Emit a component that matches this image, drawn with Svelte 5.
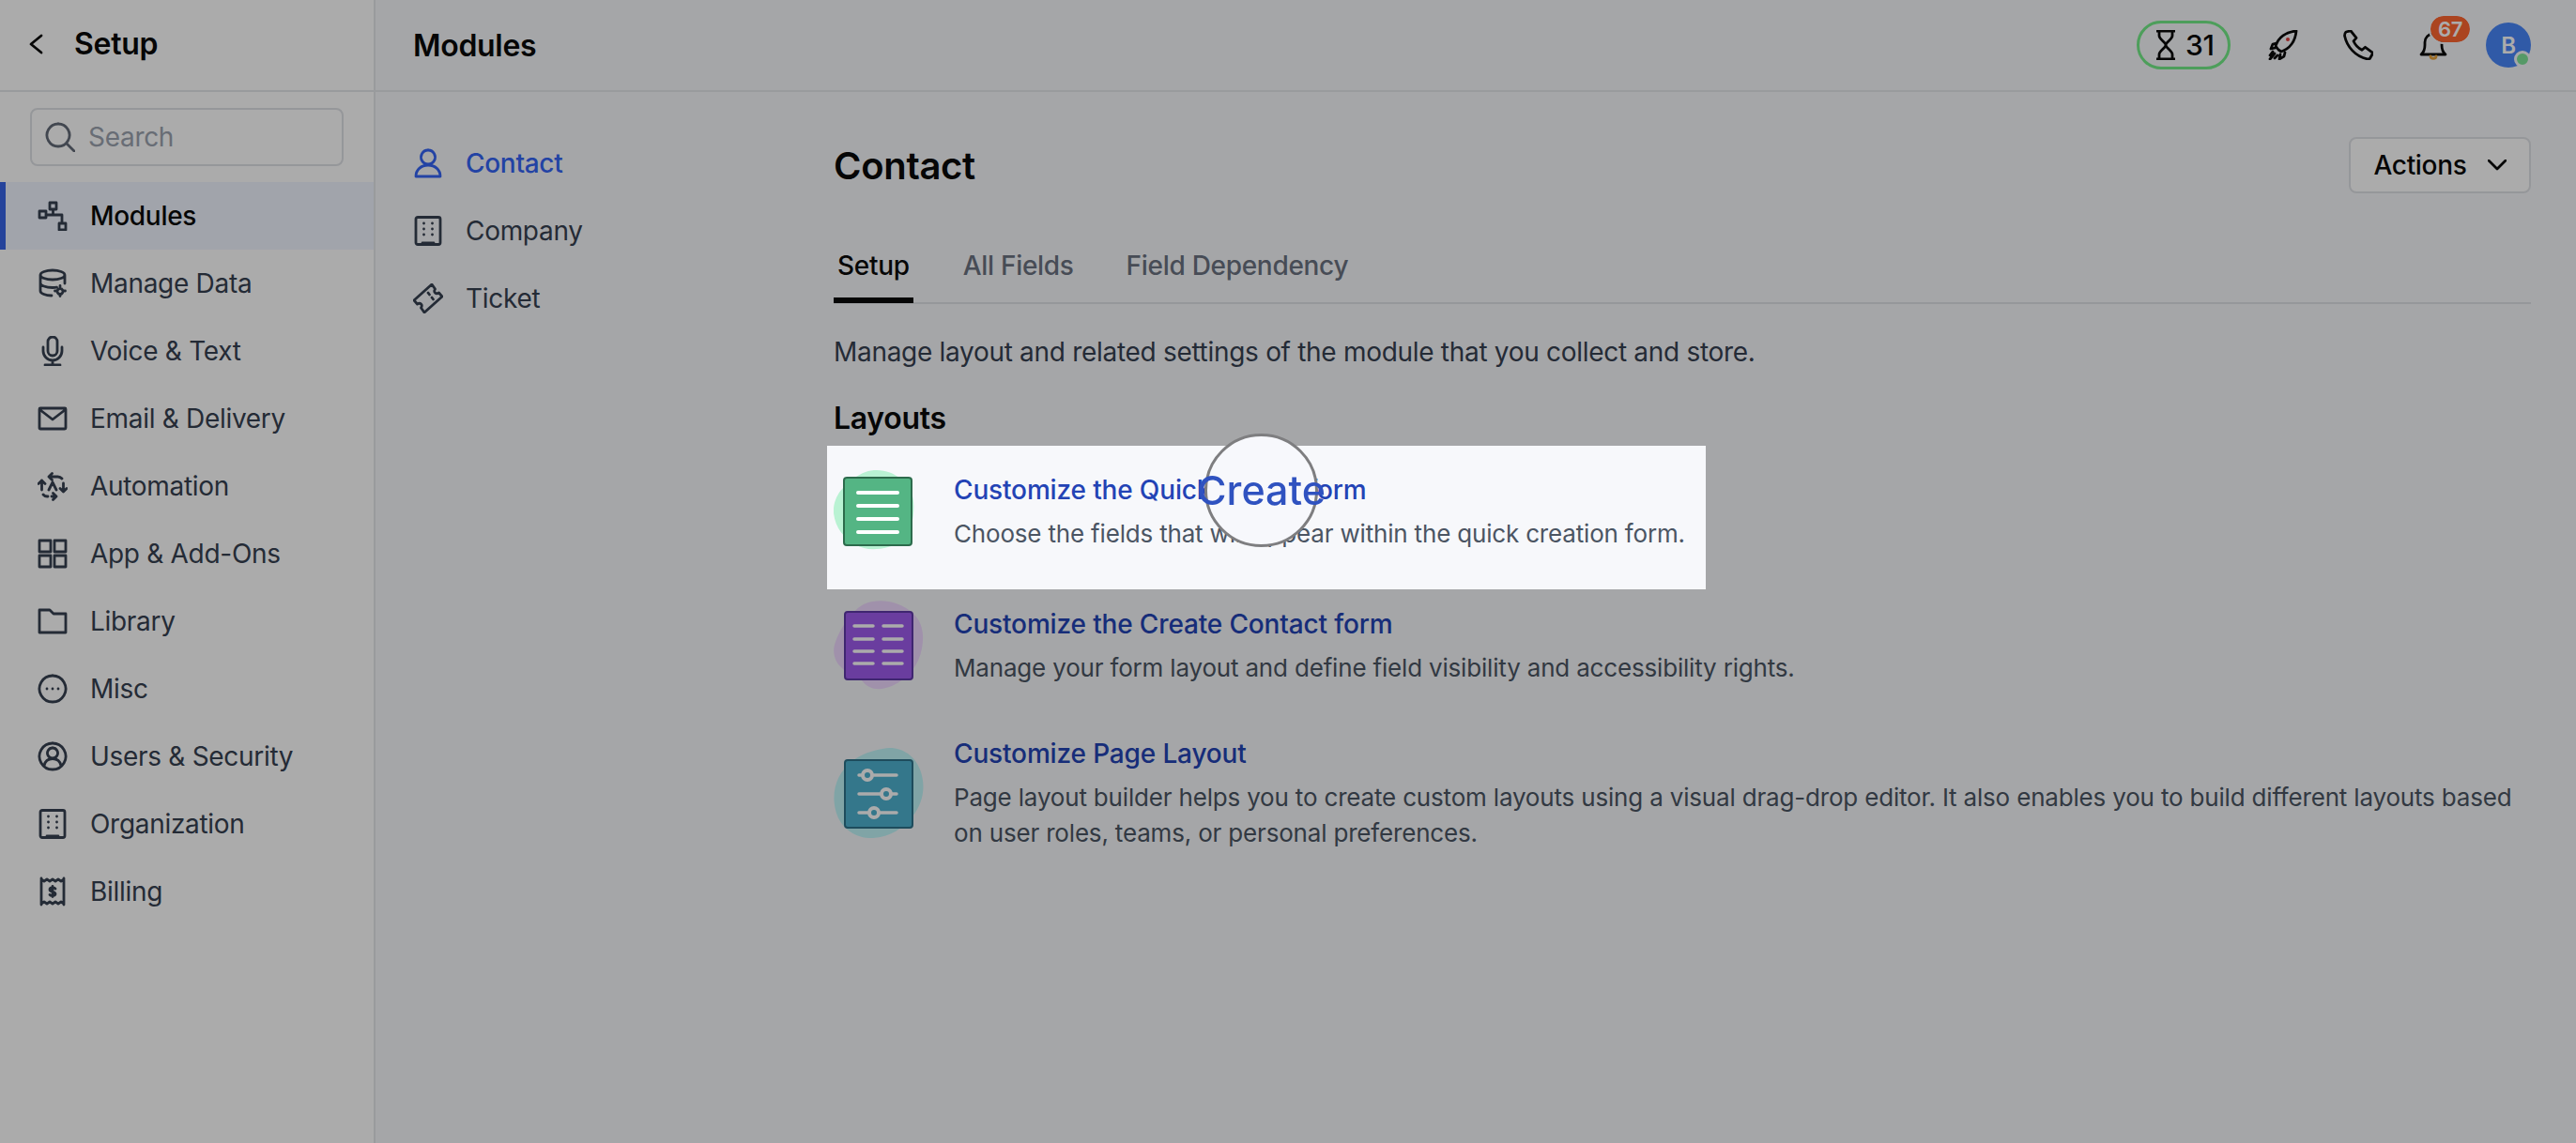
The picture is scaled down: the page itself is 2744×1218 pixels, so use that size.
<script>
  const sideItems = [
    { label: 'Modules', active: true, d: 'M13 2h7v7h-7zM2 11h7v7H2zM23 24h7v7h-7zM9 15h17v9M16.500 9v6' },
    { label: 'Manage Data', d: 'M3 7c0-2.800 5.800-5 13-5s13 2.200 13 5-5.800 5-13 5S3 9.800 3 7zM3 7v17c0 2.800 5.500 5 12 5M29 7v9M3 15.500c0 2.800 5.800 5 13 5 1.500 0 3-.1 4.500-.3M24 21.500a3 3 0 1 0 .01 0M24 18.500v1M24 28.500v1M18.500 24h1M28.500 24h1' },
    { label: 'Voice & Text', d: 'M11 6a5 5 0 0 1 10 0v10a5 5 0 0 1-10 0zM6 12v4a10 10 0 0 0 20 0v-4M16 26v5M8 31h16' },
    { label: 'Email & Delivery', d: 'M3 5h26a1 1 0 0 1 1 1v20a1 1 0 0 1-1 1H3a1 1 0 0 1-1-1V6a1 1 0 0 1 1-1zM3 7l13 10L29 7' },
    { label: 'Automation', d: 'M12 6h9a6 6 0 0 1 5 2M15.500 2.500 12 6l3.500 3.500M27.500 13v9M24 18.500l3.500 3.500 3.500-3.500M11 27a6 6 0 0 1-5-2M20 27h-5M16.500 23.500 20 27l-3.500 3.500M4.500 20v-10M1 13.500 4.500 10 8 13.500M12 20l4-8 4 8' },
    { label: 'App & Add-Ons', d: 'M2 2h12v12H2zM18 2h12v12H18zM2 18h12v12H2zM18 18h12v12H18z' },
    { label: 'Library', d: 'M2 4h11l4 4h13v20H2z' },
    { label: 'Misc', d: 'M16 2a14 14 0 1 0 .01 0M10 16h.01M16 16h.01M22 16h.01' },
    { label: 'Users & Security', d: 'M16 2a14 14 0 1 0 .01 0M16 7a5.500 5.500 0 1 0 .01 0M7 26c1-5 4.500-7.500 9-7.500s8 2.500 9 7.500' },
    { label: 'Organization', d: 'M5 1.500h22a2 2 0 0 1 2 2v25a2 2 0 0 1-2 2H5a2 2 0 0 1-2-2v-25a2 2 0 0 1 2-2zM11.500 8h.01M20.500 8h.01M11.500 14h.01M20.500 14h.01M11.500 20h.01M20.500 20h.01M10 29h12' },
    { label: 'Billing', d: 'M4 2v28M28 2v28M4 3l3 2 3-2 3 2 3-2 3 2 3-2 3 2 3-2M4 29l3-2 3 2 3-2 3 2 3-2 3 2 3-2 3 2M19 13c-1-1.500-6-1.500-6 1 0 3 6 1.500 6 4.500 0 2.500-5 2.500-6 1M16 10.500v11' }
  ];

  const moduleItems = [
    { label: 'Contact', active: true, d: 'M16 2a7.500 7.500 0 1 0 .01 0M3 30c0-7 5.500-12 13-12s13 5 13 12z' },
    { label: 'Company', d: 'M5 1.500h22a2 2 0 0 1 2 2v25a2 2 0 0 1-2 2H5a2 2 0 0 1-2-2v-25a2 2 0 0 1 2-2zM11.500 8h.01M20.500 8h.01M11.500 14h.01M20.500 14h.01M11.500 20h.01M20.500 20h.01M10 29h12' },
    { label: 'Ticket', d: 'M20 1 1 18l3.500 4c1.500-1 3-1 4 0s1 2.500 0 4l3.500 5L31 14l-3.500-4c-1.500 1-3 1-4 0s-1-2.500 0-4zM16 10l1.500 2M20 15l1.500 2' }
  ];

  const tabs = ['Setup', 'All Fields', 'Field Dependency'];
</script>

<div class="app">
  <aside class="sidebar">
    <div class="side-head">
      <svg class="back" viewBox="0 0 16 22"><path d="M14 2 3 11l11 9" /></svg>
      <span>Setup</span>
    </div>
    <div class="search">
      <svg viewBox="0 0 32 32"><path d="M14 2a12 12 0 1 0 .01 0M22.500 22.500 31 31" /></svg>
      <input placeholder="Search" />
    </div>
    <nav>
      {#each sideItems as item}
        <div class="side-item" class:active={item.active}>
          <svg class="ico" viewBox="0 0 32 32"><path d={item.d} /></svg>
          <span>{item.label}</span>
        </div>
      {/each}
    </nav>
  </aside>

  <div class="main">
    <header>
      <h2>Modules</h2>
      <div class="tools">
        <div class="pill">
          <svg viewBox="0 0 20 32"><path d="M0 1h20M0 31h20M3 1v5c0 4 7 7 7 10s-7 6-7 10v5M17 1v5c0 4-7 7-7 10s7 6 7 10v5" /></svg>
          <span>31</span>
        </div>
        <svg class="tool rocket" viewBox="0 0 32 32">
          <path d="M11 21 8 17c3-9 11-15 22-16-1 11-7 19-16 22l-3-2zM9 14l-4 1-2 5 5-1M18 24l-1 4-5 3 1-5M7 25l-5 6M5 23l-3 4M10 27l-3 3" />
          <circle class="dot" cx="21" cy="10" r="2" />
        </svg>
        <svg class="tool" viewBox="0 0 32 32"><path d="M3 2 8 .8l6 7.500-3 3.500c1.500 3.500 5 7.500 9 9.500l3.500-3 7.500 5.500c.5 1 0 2-.5 3l-2 3.500c-1 .8-2 .8-3 .5C13 28 4 18 1.500 6c0-2 .5-3 1.500-4z" /></svg>
        <div class="bell">
          <svg class="tool" viewBox="0 0 32 32"><path d="M3 26h26c-2.500-2-4-5-4-10V13c0-5-4-9-9-9s-9 4-9 9v3c0 5-1.500 8-4 10z" /><path class="clap" d="M13 28c0 3 6 3 6 0" /></svg>
          <span class="badge">67</span>
        </div>
        <div class="avatar">
          <span>B</span>
          <i></i>
        </div>
      </div>
    </header>

    <div class="body">
      <div class="module-nav">
        {#each moduleItems as item}
          <div class="module-item" class:active={item.active}>
            <svg class="ico" viewBox="0 0 32 32"><path d={item.d} /></svg>
            <span>{item.label}</span>
          </div>
        {/each}
      </div>

      <section class="content">
        <div class="title-row">
          <h1>Contact</h1>
          <button class="actions">
            Actions
            <svg viewBox="0 0 20 12"><path d="M1 1l9 9 9-9" /></svg>
          </button>
        </div>

        <div class="tabs">
          {#each tabs as tab, i}
            <div class="tab" class:on={i === 0}>{tab}</div>
          {/each}
        </div>

        <p class="lead">Manage layout and related settings of the module that you collect and store.</p>
        <h3>Layouts</h3>

        <div class="list">
          <div class="row">
            <svg class="art" viewBox="0 0 96 96">
              <path class="blob-g" d="M34 6c14-5 30 0 38 8 9 8 15 16 13 36-1 15-9 32-27 36-12 3-24 4-35-3C11 76 2 66 0 50c-1-9 3-20 10-27 6-6 15-14 24-17z" />
              <rect class="sq-g" x="11" y="12" width="72" height="72" rx="3" />
              <path class="ln" d="M26 28h42M26 42h42M26 56h42M26 70h42" />
            </svg>
            <div>
              <div class="link">Customize the Quick Create form</div>
              <div class="desc">Choose the fields that will appear within the quick creation form.</div>
            </div>
          </div>

          <div class="row">
            <svg class="art" viewBox="0 0 96 96">
              <path class="blob-p" d="M34 3c16-6 36-2 50 10 10 9 13 22 10 38-3 17-14 32-32 40-12 5-24 5-32-6-4-5-14-5-22-14C1 65-2 54 2 44 7 30 20 9 34 3z" />
              <rect class="sq-p" x="12" y="12" width="72" height="72" rx="3" />
              <path class="ln thin" d="M22 27h20M53 27h20M22 41h20M53 41h20M22 54h20M53 54h20M22 67h20M53 67h20" />
            </svg>
            <div>
              <div class="link">Customize the Create Contact form</div>
              <div class="desc">Manage your form layout and define field visibility and accessibility rights.</div>
            </div>
          </div>

          <div class="row">
            <svg class="art" viewBox="0 0 96 96">
              <path class="blob-t" d="M52 1c18-4 34 6 40 22 7 18 3 36-8 50-9 12-24 22-42 23C22 97 6 84 2 66-3 46 4 26 20 14 30 6 41 3 52 1z" />
              <rect class="sq-t" x="12" y="13" width="72" height="72" rx="3" />
              <path class="ln thin" d="M27 29h40M27 49h40M27 69h40" />
              <g class="knobs">
                <circle cx="36" cy="29" r="5" />
                <circle cx="56" cy="49" r="5" />
                <circle cx="43" cy="69" r="5" />
              </g>
            </svg>
            <div>
              <div class="link">Customize Page Layout</div>
              <div class="desc">Page layout builder helps you to create custom layouts using a visual drag-drop editor. It also enables you to build different layouts based on user roles, teams, or personal preferences.</div>
            </div>
          </div>
        </div>
      </section>
    </div>
  </div>

  <!-- tour overlay: dims the page except the highlighted row -->
  <div class="spot"></div>
  <div class="lens"><span>Create</span></div>
</div>

<style>
  :global(body) {
    margin: 0;
    background: #f7f8fb;
    overflow: hidden;
  }
  .app {
    display: flex;
    height: 1218px;
    position: relative;
    overflow: hidden;
    font-family: Inter, "Liberation Sans", sans-serif;
    font-size: 28px;
    letter-spacing: -0.3px;
    color: #374151;
  }
  svg {
    display: block;
    flex: none;
    fill: none;
    stroke: currentColor;
    stroke-width: 2.8;
    stroke-linecap: round;
    stroke-linejoin: round;
  }
  .sidebar {
    width: 398px;
    flex: none;
    background: #fff;
    border-right: 2px solid #e5e7eb;
  }
  .side-head {
    height: 98px;
    box-sizing: border-box;
    border-bottom: 2px solid #e5e7eb;
    display: flex;
    align-items: center;
    font-size: 32px;
    font-weight: 600;
    color: #0a0a0a;
    padding: 0 0 4px 30px;
  }
  .back {
    width: 16px;
    height: 22px;
    margin-right: 33px;
    margin-top: 2px;
  }
  .search {
    margin: 17px 32px 17px 32px;
    height: 62px;
    box-sizing: border-box;
    border: 2px solid #dfe1e6;
    border-radius: 8px;
    display: flex;
    align-items: center;
    gap: 14px;
    padding-left: 14px;
    color: #636b78;
  }
  .search svg {
    width: 32px;
    height: 32px;
  }
  .search input {
    border: 0;
    background: transparent;
    outline: 0;
    font: inherit;
    letter-spacing: inherit;
    min-width: 0;
    padding: 0;
    flex: 1;
  }
  .search input::placeholder {
    color: #9ca3af;
    opacity: 1;
  }
  .side-item {
    height: 72px;
    display: flex;
    align-items: center;
    gap: 24px;
    padding-left: 40px;
  }
  .side-item.active {
    background: #f0f5ff;
    color: #0a0a0a;
    font-weight: 500;
    box-shadow: inset 6px 0 0 #3864e8;
  }
  .side-item.active svg {
    color: #374151;
  }
  .ico {
    width: 32px;
    height: 32px;
  }
  .main {
    flex: 1;
    min-width: 0;
    background: #f7f8fb;
  }
  header {
    height: 98px;
    box-sizing: border-box;
    border-bottom: 2px solid #e5e7eb;
    display: flex;
    align-items: center;
    justify-content: space-between;
    padding: 0 48px 0 40px;
  }
  h2 {
    margin: 0;
    font-size: 32px;
    font-weight: 600;
    color: #0a0a0a;
  }
  .tools {
    display: flex;
    align-items: center;
    gap: 48px;
    color: #0a0a0a;
  }
  .pill {
    width: 100px;
    height: 52px;
    box-sizing: border-box;
    border: 3px solid #74ec88;
    border-radius: 26px;
    display: flex;
    align-items: center;
    gap: 11px;
    padding-left: 18px;
    font-size: 30px;
    font-weight: 500;
    margin-right: -8px;
  }
  .pill svg {
    width: 20px;
    height: 32px;
  }
  .tool {
    width: 32px;
    height: 32px;
  }
  .rocket .dot {
    fill: #e03c3c;
    stroke: none;
  }
  .bell {
    position: relative;
    margin-right: -8px;
  }
  .clap {
    stroke: #e8a33c;
  }
  .badge {
    position: absolute;
    left: 13px;
    top: -15px;
    width: 42px;
    height: 28px;
    border-radius: 14px;
    background: #ff6630;
    color: #fff;
    font-size: 22px;
    font-weight: 600;
    line-height: 28px;
    text-align: center;
    outline: 2px solid #f7f8fc;
  }
  .avatar {
    width: 48px;
    height: 48px;
    border-radius: 50%;
    background: #4886f9;
    color: #fff;
    display: flex;
    align-items: center;
    justify-content: center;
    font-size: 24px;
    font-weight: 600;
    position: relative;
  }
  .avatar i {
    position: absolute;
    right: 0;
    bottom: 0;
    width: 12px;
    height: 12px;
    border-radius: 50%;
    background: #7fe59a;
    border: 3px solid #f7f8fc;
  }
  .body {
    display: flex;
    padding: 40px 48px 0 40px;
  }
  .module-nav {
    width: 448px;
    flex: none;
  }
  .module-item {
    height: 72px;
    display: flex;
    align-items: center;
    gap: 24px;
    color: #374151;
  }
  .module-item.active {
    color: #3565f5;
    font-weight: 500;
  }
  .content {
    flex: 1;
    min-width: 0;
  }
  .title-row {
    display: flex;
    justify-content: space-between;
    align-items: flex-start;
    margin-top: 8px;
    height: 60px;
  }
  h1 {
    margin: 1px 0 0;
    font-size: 40px;
    font-weight: 600;
    color: #0a0a0a;
    line-height: 60px;
  }
  .actions {
    width: 194px;
    height: 60px;
    box-sizing: border-box;
    border: 2px solid #dfe1e6;
    border-radius: 8px;
    background: #fff;
    font: inherit;
    letter-spacing: inherit;
    font-weight: 500;
    color: #0a0a0a;
    display: flex;
    align-items: center;
    justify-content: center;
    gap: 22px;
  }
  .actions svg {
    width: 20px;
    height: 12px;
  }
  .tabs {
    display: flex;
    gap: 56px;
    margin-top: 48px;
    border-bottom: 2px solid #dfe1e6;
    height: 68px;
  }
  .tab {
    box-sizing: border-box;
    height: 69px;
    line-height: 58px;
    padding: 0 4px;
    color: #6b7280;
    font-weight: 500;
  }
  .tab + .tab {
    padding: 0;
  }
  .tab.on {
    color: #0a0a0a;
    border-bottom: 6px solid #0a0a0a;
    margin-right: -3px;
  }
  .lead {
    margin: 32px 0 0;
    line-height: 38px;
  }
  h3 {
    margin: 32px 0 0;
    font-size: 32px;
    font-weight: 600;
    color: #0a0a0a;
    line-height: 40px;
  }
  .list {
    display: flex;
    flex-direction: column;
    gap: 47px;
    margin-top: 31px;
  }
  .row {
    display: flex;
    align-items: center;
    gap: 32px;
  }
  .art {
    width: 96px;
    height: 96px;
    stroke-width: 2;
  }
  .blob-g { fill: #b9f2d3; stroke: none; }
  .blob-p { fill: #efd8ff; stroke: none; }
  .blob-t { fill: #bff5f8; stroke: none; }
  .sq-g { fill: #54b584; stroke: #2d6b4c; }
  .sq-p { fill: #9f5ced; stroke: #5f39a8; }
  .sq-t { fill: #4eb2cf; stroke: #2d728a; }
  .ln {
    stroke: #fff;
    stroke-width: 4;
  }
  .ln.thin {
    stroke-width: 3.500;
  }
  .knobs circle {
    fill: #4eb2cf;
    stroke: #fff;
    stroke-width: 4;
  }
  .link {
    color: #2343b5;
    font-weight: 500;
    line-height: 40px;
    margin-bottom: 8px;
    letter-spacing: -0.15px;
  }
  .desc {
    color: #4b5563;
    font-size: 26px;
    line-height: 38px;
    letter-spacing: -0.18px;
  }
  .spot {
    position: absolute;
    left: 881px;
    top: 475px;
    width: 936px;
    height: 153px;
    box-shadow: 0 0 0 3000px rgba(0, 0, 0, 0.33);
    pointer-events: none;
  }
  .lens {
    position: absolute;
    left: 1283px;
    top: 462px;
    width: 121px;
    height: 121px;
    box-sizing: border-box;
    border: 3px solid #7e7e80;
    border-radius: 50%;
    background: #f7f8fc;
    display: flex;
    justify-content: center;
    padding-top: 27px;
    color: #2f52c0;
    font-size: 43px;
    font-weight: 500;
    line-height: 60px;
    letter-spacing: 0;
  }
  .lens span {
    filter: blur(0.5px);
  }
</style>
